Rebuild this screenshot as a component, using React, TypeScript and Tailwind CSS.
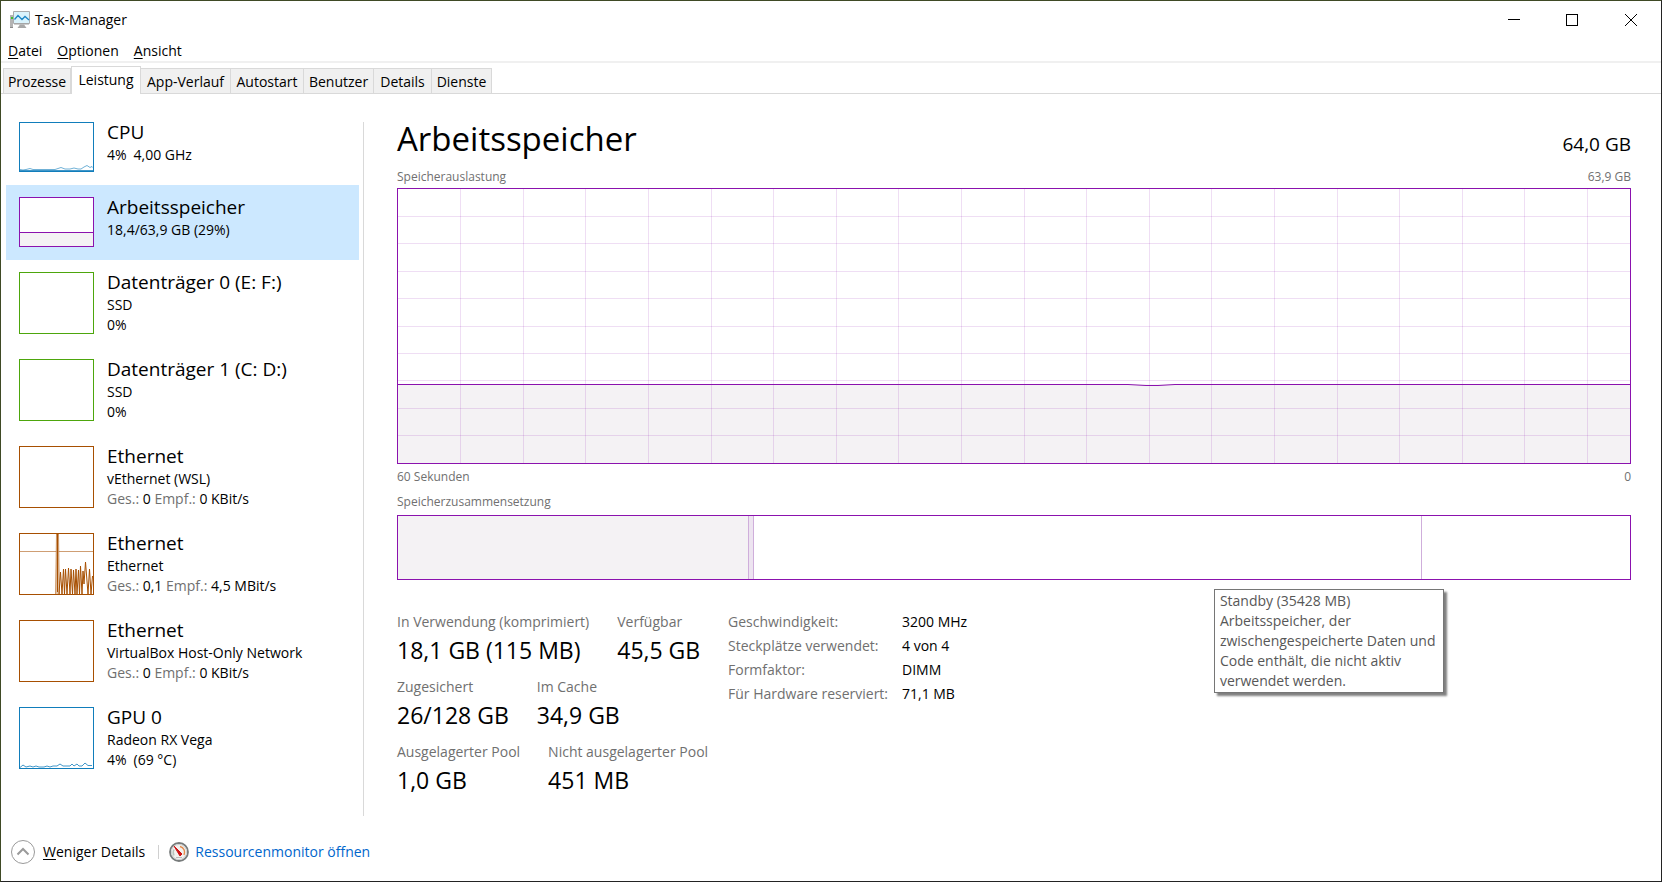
import { useState } from 'react';
import type { ReactNode } from 'react';

const tabs = [
  { label: 'Prozesse', width: 'w-[68px]' },
  { label: 'Leistung', width: 'w-[70px]' },
  { label: 'App-Verlauf', width: 'w-[90px]' },
  { label: 'Autostart', width: 'w-[73px]' },
  { label: 'Benutzer', width: 'w-[70px]' },
  { label: 'Details', width: 'w-[58px]' },
  { label: 'Dienste', width: 'w-[60px]' },
];

const menuItems = ['Datei', 'Optionen', 'Ansicht'];

const hardware = [
  ['Geschwindigkeit:', '3200 MHz'],
  ['Steckplätze verwendet:', '4 von 4'],
  ['Formfaktor:', 'DIMM'],
  ['Für Hardware reserviert:', '71,1 MB'],
];

const statRows = [
  [
    ['In Verwendung (komprimiert)', '18,1 GB (115 MB)'],
    ['Verfügbar', '45,5 GB'],
  ],
  [
    ['Zugesichert', '26/128 GB'],
    ['Im Cache', '34,9 GB'],
  ],
  [
    ['Ausgelagerter Pool', '1,0 GB'],
    ['Nicht ausgelagerter Pool', '451 MB'],
  ],
];

function Traffic({ sent, received }: { sent: string; received: string }) {
  return (
    <>
      <span className="text-[#707070]">Ges.:</span> {sent} <span className="text-[#707070]">Empf.:</span> {received}
    </>
  );
}

const devices: { title: string; lines: ReactNode[]; border: string; graph?: ReactNode }[] = [
  {
    title: 'CPU',
    lines: [<span className="flex gap-[7px]"><span>4%</span><span>4,00 GHz</span></span>],
    border: 'border-[#117dbb]',
    graph: (
      <svg className="block h-full w-full" viewBox="0 0 73 48" preserveAspectRatio="none">
        <path d="M0 47.500h73" stroke="#117dbb" strokeOpacity="0.8" />
        <path d="M0 46.500l3 .5 3-.5 4-1 3 1h22l3-1 3-1 4 1.500h5l4-1 4 1h3l3-2 3-1.500 3 2 2-1 2 2" fill="none" stroke="#117dbb" strokeOpacity="0.6" />
      </svg>
    ),
  },
  {
    title: 'Arbeitsspeicher',
    lines: ['18,4/63,9 GB (29%)'],
    border: 'border-[#8b12ae]',
    graph: (
      <svg className="block h-full w-full" viewBox="0 0 73 48" preserveAspectRatio="none">
        <path d="M0 34.500h73V48H0z" fill="#f4f2f4" />
        <path d="M0 34.500h73" stroke="#8b12ae" />
      </svg>
    ),
  },
  { title: 'Datenträger 0 (E: F:)', lines: ['SSD', '0%'], border: 'border-[#4da60c]' },
  { title: 'Datenträger 1 (C: D:)', lines: ['SSD', '0%'], border: 'border-[#4da60c]' },
  { title: 'Ethernet', lines: ['vEthernet (WSL)', <Traffic sent="0" received="0 KBit/s" />], border: 'border-[#a74f01]' },
  {
    title: 'Ethernet',
    lines: ['Ethernet', <Traffic sent="0,1" received="4,5 MBit/s" />],
    border: 'border-[#a74f01]',
    graph: (
      <svg className="block h-full w-full" viewBox="0 0 73 60" preserveAspectRatio="none">
        <path d="M0 17.500h73" stroke="#a74f01" strokeOpacity="0.55" />
        <path d="M35.500 60L36.500 0h2l1 60" fill="#e2c4a8" stroke="#a74f01" strokeOpacity="0.5" />
        <path
          d="M37.500 0v58M39 60L40.500 38 42 60 43.500 35 44.500 60 45.500 35 47 60 48.500 34 50 60 51 35 52.500 60 53.500 36 55 60 56 35 57 60 58.500 36 59.500 60 60.500 32 62 60 63 37 64 50 65.500 28 68 60 69.500 35 71 60 72.500 42"
          fill="none"
          stroke="#a74f01"
        />
      </svg>
    ),
  },
  {
    title: 'Ethernet',
    lines: ['VirtualBox Host-Only Network', <Traffic sent="0" received="0 KBit/s" />],
    border: 'border-[#a74f01]',
  },
  {
    title: 'GPU 0',
    lines: ['Radeon RX Vega', <span className="flex gap-[7px]"><span>4%</span><span>(69 °C)</span></span>],
    border: 'border-[#117dbb]',
    graph: (
      <svg className="block h-full w-full" viewBox="0 0 73 60" preserveAspectRatio="none">
        <path d="M0 59.500l3-2.500 3 2 4-1 3 1 3-1 3 1h5l3-1 3 1 3-1 4 0 3-2 3 2h7l2-2 2 2 3-2 2 2h3l3-3 3 2.500h4" fill="none" stroke="#117dbb" strokeOpacity="0.8" />
      </svg>
    ),
  },
];

function AppIcon() {
  return (
    <svg width="20" height="18" viewBox="0 0 20 18" aria-hidden="true">
      <path d="M0 4h3v12H0z" fill="#b4b4b4" />
      <path d="M1 6h2v2H1z" fill="#3fbf2e" />
      <path d="M0 16h3v1H0z" fill="#8a8a8a" />
      <path d="M3.500.500h16v12h-16z" fill="#d9f3fc" stroke="#a9acae" />
      <path d="M4 13h15" stroke="#a0a0a0" />
      <path d="M4.500 8.500L8 4.500l4 4 3-3 4 3.500" fill="none" stroke="#1c86c6" strokeWidth="1.300" />
      <path d="M10 13.500h4l2.500 3.500h-9z" fill="#a8a8a8" />
    </svg>
  );
}

function GaugeIcon() {
  return (
    <svg width="20" height="20" viewBox="0 0 20 20" aria-hidden="true">
      <circle cx="10" cy="10" r="9" fill="#f3f1ee" stroke="#777b7b" strokeWidth="1.800" />
      <circle cx="10" cy="10" r="7.600" fill="none" stroke="#cfd2d2" />
      <path d="M5 13.500A6 6 0 0 1 5 7.500" fill="none" stroke="#b9c4bd" strokeWidth="1.400" />
      <path d="M11 4.500a6 6 0 0 1 4 8.500" fill="none" stroke="#e58a4c" strokeWidth="1.400" />
      <path d="M5 4l8 8-2 2z" fill="#cf1414" stroke="#cf1414" />
      <path d="M7 15.500h6" stroke="#bdbdbd" />
    </svg>
  );
}

function UsageChart() {
  const columns = Array.from({ length: 19 }, (_, i) => `${(i + 1) * 5.082}%`);
  const rows = Array.from({ length: 9 }, (_, i) => `${(i + 1) * 10}%`);

  return (
    <div className="mt-[3px] h-[276px] border border-[#8b12ae]">
      <svg className="block h-full w-full" role="img" aria-label="Speicherauslastung">
        <rect y="71.300%" width="100%" height="28.700%" fill="#f4f2f4" />
        <g stroke="#8b12ae" strokeOpacity="0.14" shapeRendering="crispEdges">
          {columns.map((x) => (
            <line key={x} x1={x} x2={x} y1="0" y2="100%" />
          ))}
          {rows.map((y) => (
            <line key={y} x1="0" x2="100%" y1={y} y2={y} />
          ))}
        </g>
        <svg width="100%" height="100%" viewBox="0 0 1232 274" preserveAspectRatio="none">
          <path
            d="M0 195.500H730L748 196.500H760L777 195.500H1232"
            fill="none"
            stroke="#8b12ae"
            vectorEffect="non-scaling-stroke"
          />
        </svg>
      </svg>
    </div>
  );
}

export default function App() {
  const [activeTab, setActiveTab] = useState('Leistung');
  const [selected, setSelected] = useState(1);

  return (
    <div className="flex min-h-screen flex-col border border-t-[#3f4a25] border-r-[#232323] border-b-[#232323] border-l-[#3f4a25] bg-white font-['Open_Sans','Noto_Sans',sans-serif] text-sm leading-5 text-black">
      <header className="flex h-[37px] items-center pr-px">
        <div className="flex flex-1 items-center gap-[5px] pl-[9px]">
          <AppIcon />
          <h1>Task-Manager</h1>
        </div>
        <button type="button" aria-label="Minimieren" className="flex h-full w-[58px] items-center justify-center">
          <svg width="12" height="12" stroke="#000" shapeRendering="crispEdges"><path d="M0 5.500h12" /></svg>
        </button>
        <button type="button" aria-label="Maximieren" className="flex h-full w-[58px] items-center justify-center">
          <svg width="12" height="12" fill="none" stroke="#000" shapeRendering="crispEdges"><path d="M.500.500h11v11H.500z" /></svg>
        </button>
        <button type="button" aria-label="Schließen" className="flex h-full w-[59px] items-center justify-center">
          <svg width="12" height="12" stroke="#000"><path d="M0 0l12 12M12 0L0 12" /></svg>
        </button>
      </header>

      <nav className="flex h-[25px] gap-[15px] border-b-2 border-[#f0f0f0] pl-[7px]">
        {menuItems.map((item) => (
          <button key={item} type="button" className="flex h-[25px] items-center pt-px">
            <span className="underline underline-offset-2">{item[0]}</span>
            {item.slice(1)}
          </button>
        ))}
      </nav>

      <div role="tablist" className="flex h-[31px] items-end border-b border-[#d9d9d9] pl-[2px]">
        {tabs.map((tab) =>
          tab.label === activeTab ? (
            <button
              key={tab.label}
              type="button"
              role="tab"
              aria-selected="true"
              className={`-mb-px h-7 border border-b-0 border-[#d9d9d9] bg-white pb-0.5 ${tab.width}`}
            >
              {tab.label}
            </button>
          ) : (
            <button
              key={tab.label}
              type="button"
              role="tab"
              aria-selected="false"
              onClick={() => setActiveTab(tab.label)}
              className={`h-[25px] border-t border-r border-[#d9d9d9] bg-[#f0f0f0] pt-0.5 first:border-l ${tab.width}`}
            >
              {tab.label}
            </button>
          )
        )}
      </div>

      <div className="flex flex-1">
        <aside className="w-[358px] pt-4 pl-[5px]">
          {devices.map((device, i) => (
            <button
              key={i}
              type="button"
              onClick={() => setSelected(i)}
              className={`flex w-full gap-[13px] pl-[13px] text-left ${device.lines.length === 1 ? 'h-[75px]' : 'h-[87px]'} ${i === selected ? 'bg-[#cce8ff]' : ''}`}
            >
              <span className={`mt-3 w-[75px] border bg-white ${device.border} ${device.lines.length === 1 ? 'h-[50px]' : 'h-[62px]'}`}>
                {device.graph}
              </span>
              <span className="mt-[10px] flex flex-1 flex-col">
                <span className="mb-px text-[19px] leading-6">{device.title}</span>
                {device.lines.map((line, j) => (
                  <span key={j}>{line}</span>
                ))}
              </span>
            </button>
          ))}
        </aside>
        <div className="mt-7 ml-1 w-px bg-[#d9d9d9]" />

        <main className="min-w-0 flex-1 pt-[23px] pr-[30px] pl-[33px]">
          <div className="flex items-baseline justify-between">
            <h2 className="text-[33px] leading-11">Arbeitsspeicher</h2>
            <span className="text-[19px]">64,0 GB</span>
          </div>
          <div className="mt-2 flex justify-between text-xs text-[#707070]">
            <span>Speicherauslastung</span>
            <span>63,9 GB</span>
          </div>
          <UsageChart />
          <div className="mt-[5px] flex justify-between text-xs text-[#707070]">
            <span>60 Sekunden</span>
            <span>0</span>
          </div>
          <p className="mt-[9px] text-xs text-[#707070]">Speicherzusammensetzung</p>

          <div className="relative mt-[5px]">
            <div className="flex h-[65px] border border-[#8b12ae]">
              <div className="w-[28.500%] border-r border-[#cfaedb] bg-[#f4f2f4]" />
              <div className="w-[5px] border-r border-[#cfaedb] bg-[#ede4f0]" />
              <div className="w-[54.200%] border-r border-[#cfaedb]" />
            </div>
            <div
              role="tooltip"
              className="absolute top-[74px] left-[66.200%] w-[230px] border border-[#767676] bg-white px-[5px] py-px text-[#575757] shadow-[3px_3px_2px_#00000080]"
            >
              Standby (35428 MB)
              <br />
              Arbeitsspeicher, der
              <br />
              zwischengespeicherte Daten und
              <br />
              Code enthält, die nicht aktiv
              <br />
              verwendet werden.
            </div>
          </div>

          <div className="mt-[30px] flex">
            <div className="flex w-[331px] flex-col gap-[9px] pt-0.5">
              {statRows.map((row) => (
                <dl key={row[0][0]} className="flex gap-7 whitespace-nowrap">
                  {row.map(([label, value]) => (
                    <div key={label}>
                      <dt className="text-[#707070]">{label}</dt>
                      <dd className="text-[23px] leading-9">{value}</dd>
                    </div>
                  ))}
                </dl>
              ))}
            </div>
            <table className="self-start leading-6">
              <tbody>
                {hardware.map(([label, value]) => (
                  <tr key={label}>
                    <th scope="row" className="w-[174px] text-left font-normal whitespace-nowrap text-[#707070]">{label}</th>
                    <td>{value}</td>
                  </tr>
                ))}
              </tbody>
            </table>
          </div>
        </main>
      </div>

      <footer className="flex h-[65px] items-center pt-[6px] pl-[10px]">
        <button type="button" className="flex items-center gap-2">
          <svg width="24" height="24" fill="none" stroke="#9a9a9a" aria-hidden="true">
            <circle cx="12" cy="12" r="11.500" />
            <path d="M6.500 14.500L12 9l5.500 5.500" strokeWidth="2" />
          </svg>
          <span>
            <span className="underline underline-offset-2">W</span>eniger Details
          </span>
        </button>
        <span className="mr-[10px] ml-[13px] h-[14px] w-px bg-[#d0d0d0]" />
        <a href="#" className="flex items-center gap-[6px] text-[#0066cc]">
          <GaugeIcon />
          Ressourcenmonitor öffnen
        </a>
      </footer>
    </div>
  );
}
